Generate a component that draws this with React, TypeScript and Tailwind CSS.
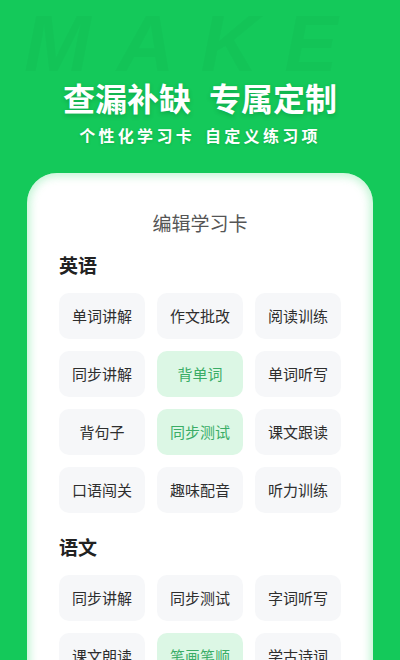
import React from 'react';

interface Chip {
  label: string;
  active?: boolean;
}

const english: Chip[] = [
  { label: '单词讲解' },
  { label: '作文批改' },
  { label: '阅读训练' },
  { label: '同步讲解' },
  { label: '背单词', active: true },
  { label: '单词听写' },
  { label: '背句子' },
  { label: '同步测试', active: true },
  { label: '课文跟读' },
  { label: '口语闯关' },
  { label: '趣味配音' },
  { label: '听力训练' },
];

const chinese: Chip[] = [
  { label: '同步讲解' },
  { label: '同步测试' },
  { label: '字词听写' },
  { label: '课文朗读' },
  { label: '笔画笔顺', active: true },
  { label: '学古诗词' },
];

const ChipGrid: React.FC<{ items: Chip[] }> = ({ items }) => (
  <div className="grid grid-cols-3 gap-3">
    {items.map((item, i) => (
      <div
        key={i}
        className={`h-[46px] rounded-[10px] flex items-center justify-center text-[15px] ${
          item.active ? 'bg-[#dcf7e5] text-[#3aad66]' : 'bg-[#f6f7f9] text-[#2e2e2e]'
        }`}
      >
        {item.label}
      </div>
    ))}
  </div>
);

export default function App() {
  return (
    <div
      className="relative w-[400px] h-[660px] overflow-hidden bg-[#14c95a]"
      style={{ fontFamily: '"Noto Sans CJK SC", "Noto Sans", sans-serif' }}
    >
      {/* faint watermark */}
      <div
        className="absolute left-[24px] top-[6px] text-[80px] leading-[76px] font-black italic tracking-[26px] text-black/[0.025] select-none"
        style={{ fontFamily: '"Liberation Sans", sans-serif' }}
      >
        MAKE
      </div>

      <div className="relative flex flex-col items-center pt-[79px]">
        <div className="flex gap-[18px] text-[32px] leading-[36px] font-bold text-white [text-shadow:0_2px_4px_rgba(0,80,30,0.25)]">
          <span>查漏补缺</span>
          <span>专属定制</span>
        </div>
        <div className="mt-[10px] flex gap-[10px] text-[16px] leading-[20px] font-bold text-white tracking-[3.3px] [text-shadow:0_1px_3px_rgba(0,80,30,0.2)]">
          <span>个性化学习卡</span>
          <span>自定义练习项</span>
        </div>

        <div className="mt-[28px] w-[346px] bg-white rounded-t-[30px] shadow-[inset_0_0_8px_3px_rgba(120,230,160,0.45)] px-[32px] pt-[38px] pb-[40px] h-[520px]">
          <div className="text-center text-[19px] leading-[24px] text-[#555555]">编辑学习卡</div>
          <div className="mt-[17px] text-[19px] leading-[26px] font-bold text-[#222222]">英语</div>
          <div className="mt-[15px]">
            <ChipGrid items={english} />
          </div>
          <div className="mt-[21px] text-[19px] leading-[26px] font-bold text-[#222222]">语文</div>
          <div className="mt-[15px]">
            <ChipGrid items={chinese} />
          </div>
        </div>
      </div>
    </div>
  );
}
